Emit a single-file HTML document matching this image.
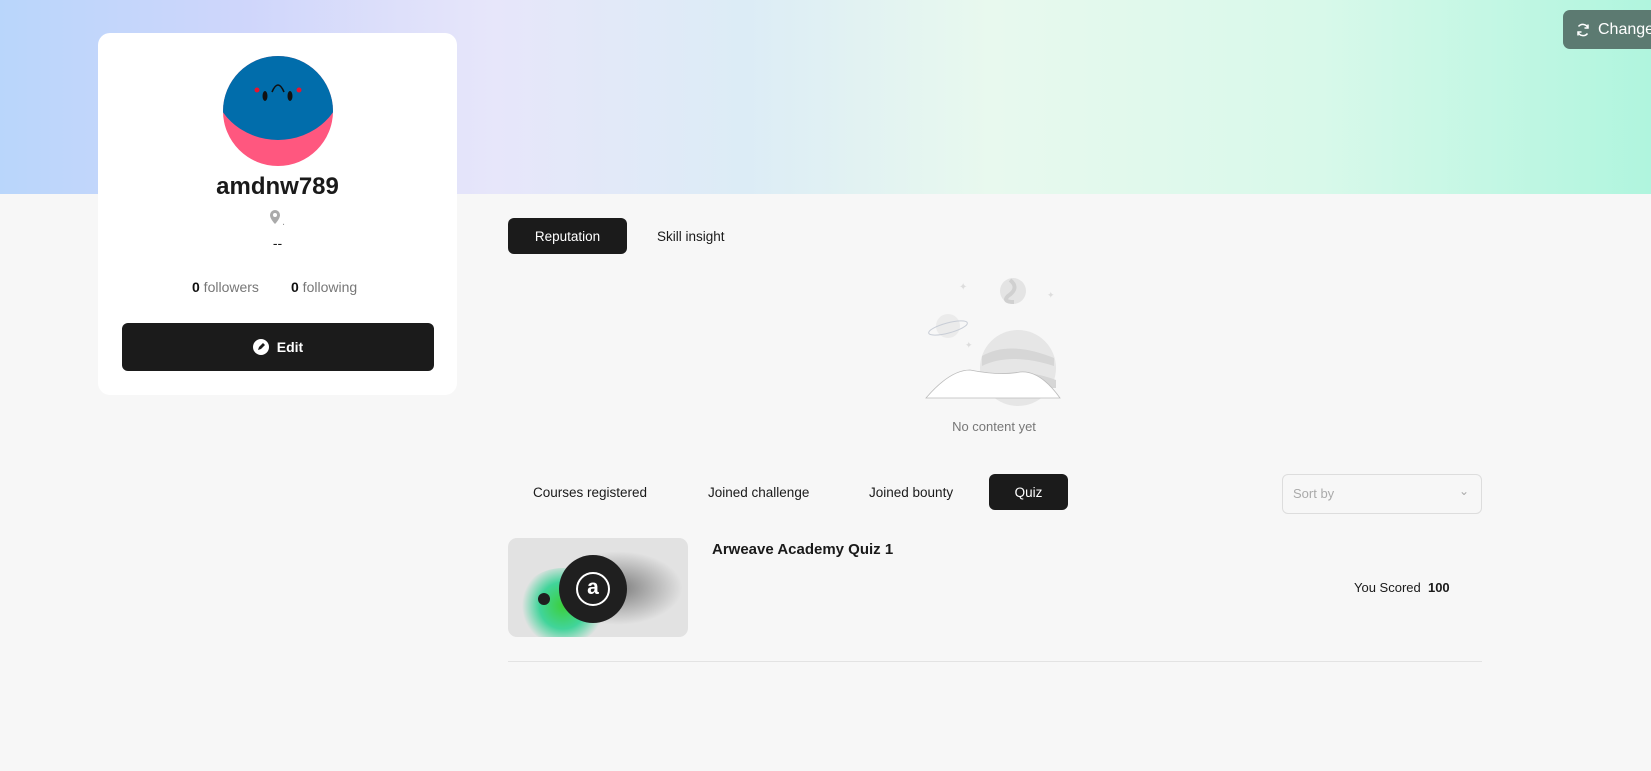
<!DOCTYPE html>
<html><head><meta charset="utf-8"><style>
*{margin:0;padding:0;box-sizing:border-box}
body{width:1651px;height:771px;overflow:hidden;background:#f7f7f7;font-family:"Liberation Sans",sans-serif;color:#1a1a1a;position:relative}
.banner{position:absolute;left:0;top:0;width:1651px;height:194px;background:linear-gradient(90deg,#b9d6fb 0%,#cfd6fb 15%,#e7e6fa 30%,#dcecf6 45%,#e8f9ee 60%,#d8f9ea 80%,#b0f5de 100%)}
.abs{position:absolute}
.card{left:98px;top:33px;width:359px;height:362px;background:#fff;border-radius:12px}
.tab{position:absolute;font-size:13.5px;display:flex;align-items:center;justify-content:center;height:36px}
.dark{background:#1b1b1b;color:#fff;border-radius:6px}
</style></head><body>
<div class="banner"></div>
<div class="abs" style="left:1563px;top:10px;width:100px;height:39px;background:#5c7a71;border-radius:7px;color:#fff;font-size:16px;display:flex;align-items:center;padding-left:12px">
<svg width="16" height="16" viewBox="0 0 16 16" fill="none" stroke="#fff" stroke-width="1.5"><path d="M13 6A5.5 5.5 0 0 0 3.5 4.5M3 10a5.5 5.5 0 0 0 9.5 1.5"/><path d="M13 2.5V6H9.5M3 13.5V10h3.5"/></svg><span style="margin-left:7px">Change</span></div>
<div class="abs card"></div>
<svg class="abs" style="left:223px;top:56px" width="110" height="110" viewBox="0 0 110 110">
<defs><clipPath id="c"><circle cx="55" cy="55" r="55"/></clipPath></defs>
<g clip-path="url(#c)"><rect width="110" height="110" fill="#ff577f"/><ellipse cx="55" cy="22" rx="66" ry="62" fill="#016dab"/></g>
<circle cx="34" cy="34" r="2.5" fill="#e8142f"/><circle cx="76" cy="34" r="2.5" fill="#e8142f"/>
<ellipse cx="42" cy="40" rx="2.5" ry="5" fill="#111"/><ellipse cx="67" cy="40" rx="2.5" ry="5" fill="#111"/>
<path d="M49 36 Q55 22 61 36" stroke="#111" stroke-width="1.6" fill="none"/></svg>
<div class="abs" style="left:98px;width:359px;top:173px;text-align:center;font-size:24px;font-weight:bold">amdnw789</div>
<div class="abs" style="left:268px;top:209px"><svg width="14" height="16" viewBox="0 0 14 16"><path d="M7 1a5 5 0 0 0-5 5c0 4 5 9 5 9s5-5 5-9a5 5 0 0 0-5-5z" fill="#aaa"/><circle cx="7" cy="6" r="2" fill="#fff"/></svg><span style="font-size:11px;color:#999">.</span></div>
<div class="abs" style="left:98px;width:359px;top:235px;text-align:center;font-size:14px">--</div>
<div class="abs" style="left:192px;top:279px;font-size:14px;color:#777"><b style="color:#111">0</b> followers</div>
<div class="abs" style="left:291px;top:279px;font-size:14px;color:#777"><b style="color:#111">0</b> following</div>
<div class="abs dark" style="left:122px;top:323px;width:312px;height:48px;display:flex;align-items:center;justify-content:center;font-weight:bold;font-size:14px;border-radius:6px">
<svg width="16" height="16" viewBox="0 0 16 16" style="margin-right:8px"><circle cx="8" cy="8" r="8" fill="#fff"/><path d="M5 11l1-3 4-4 2 2-4 4z" fill="#1b1b1b"/></svg>Edit</div>

<div class="tab dark" style="left:508px;top:218px;width:119px">Reputation</div>
<div class="tab" style="left:657px;top:218px">Skill insight</div>
<svg class="abs" style="left:910px;top:270px" width="170" height="140" viewBox="0 0 170 140">
<circle cx="103" cy="21" r="13" fill="#e4e4e4"/><path d="M100 10 Q110 18 98 26 Q92 32 104 32" stroke="#d0d0d0" stroke-width="4" fill="none"/>
<circle cx="38" cy="56" r="12" fill="#ebebeb"/><ellipse cx="38" cy="58" rx="20" ry="5" transform="rotate(-15 38 58)" fill="none" stroke="#c8cdd6"/>
<circle cx="108" cy="98" r="38" fill="#e6e6e6"/><path d="M72 86 Q100 70 144 88 L144 96 Q100 82 72 96z" fill="#d6d6d6"/><path d="M70 108 Q110 96 146 110 L146 118 L70 118z" fill="#d6d6d6"/>
<path d="M16 128 Q40 100 60 100 Q90 106 110 102 Q130 100 150 128z" fill="#fff" stroke="#bbb" stroke-width="0.8"/>
<text x="49" y="20" fill="#ddd" font-size="10">✦</text><text x="137" y="28" fill="#ddd" font-size="9">✦</text><text x="55" y="78" fill="#ddd" font-size="9">✦</text></svg>
<div class="abs" style="left:900px;width:188px;top:419px;text-align:center;font-size:13px;color:#777">No content yet</div>

<div class="tab" style="left:533px;top:474px">Courses registered</div>
<div class="tab" style="left:708px;top:474px">Joined challenge</div>
<div class="tab" style="left:869px;top:474px">Joined bounty</div>
<div class="tab dark" style="left:989px;top:474px;width:79px">Quiz</div>
<div class="abs" style="left:1282px;top:474px;width:200px;height:40px;border:1px solid #ddd;border-radius:6px;font-size:13px;color:#aaa;padding:11px 10px">Sort by<span style="position:absolute;right:12px;top:9px;font-size:12px">&#8964;</span></div>

<div class="abs" style="left:508px;top:538px;width:180px;height:99px;background:#e2e2e2;border-radius:9px;overflow:hidden">
<div class="abs" style="left:10px;top:30px;width:90px;height:75px;border-radius:50%;background:radial-gradient(circle,#3ccf3c 0%,#41d49a 40%,rgba(200,240,200,0) 70%)"></div>
<div class="abs" style="left:80px;top:10px;width:100px;height:80px;background:radial-gradient(ellipse at 30% 50%,rgba(60,60,60,.6),rgba(200,200,200,0) 65%)"></div>
<div class="abs" style="left:51px;top:17px;width:68px;height:68px;border-radius:50%;background:#1f1f1f"></div>
<div class="abs" style="left:68px;top:34px;width:34px;height:34px;border-radius:50%;border:2px solid #fff;color:#fff;font-size:21px;text-align:center;line-height:28px;font-weight:bold">a</div>
<div class="abs" style="left:30px;top:55px;width:12px;height:12px;border-radius:50%;background:#1f1f1f"></div></div>
<div class="abs" style="left:712px;top:541px;font-size:15px;font-weight:bold">Arweave Academy Quiz 1</div>
<div class="abs" style="left:1354px;top:580px;font-size:13px">You Scored &nbsp;<b>100</b></div>
<div class="abs" style="left:508px;top:661px;width:974px;height:1px;background:#e3e3e3"></div>
</body></html>
